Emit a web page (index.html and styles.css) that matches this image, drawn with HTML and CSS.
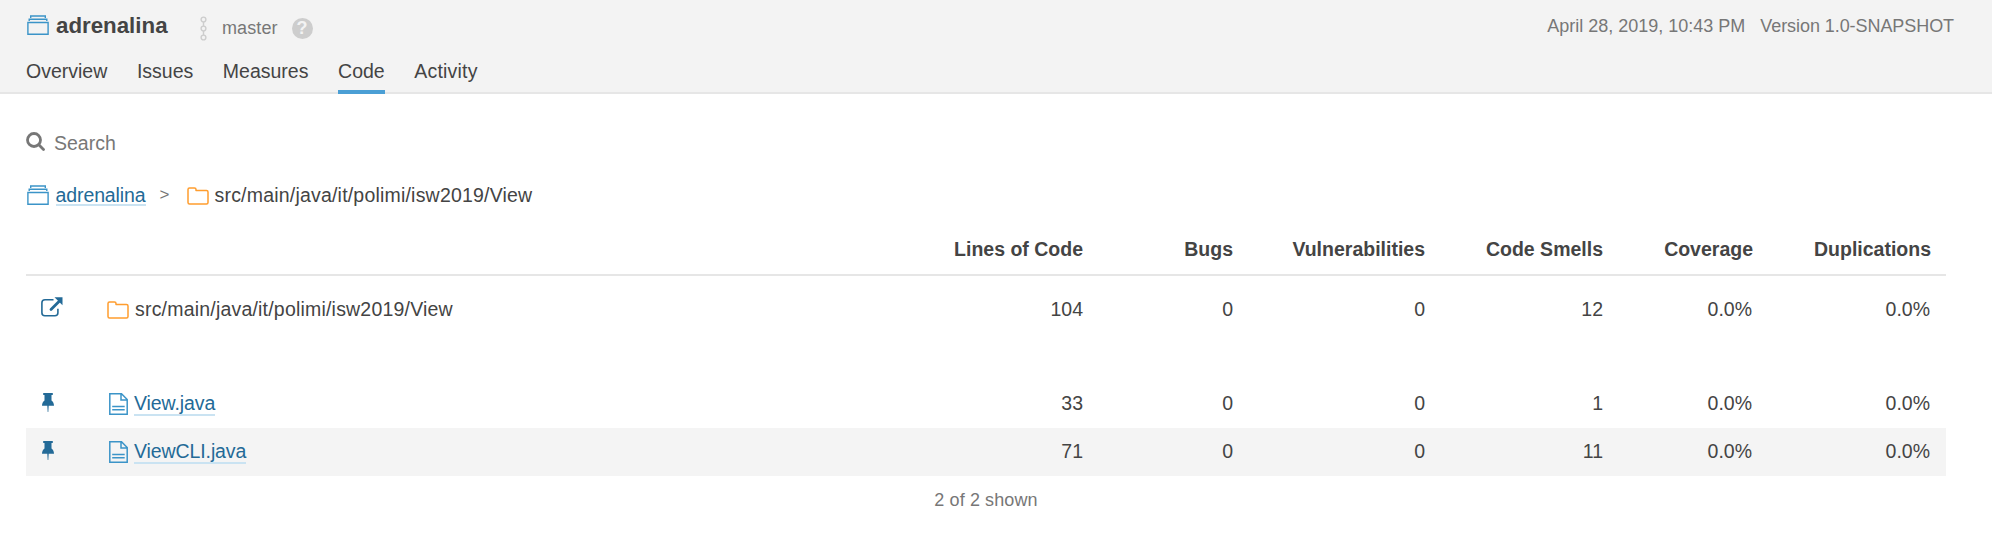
FILE: index.html
```html
<!DOCTYPE html>
<html lang="en">
<head>
<meta charset="utf-8">
<title>adrenalina</title>
<link rel="stylesheet" href="styles.css">
</head>
<body>
<svg class="defs" width="0" height="0">
  <symbol id="project" viewBox="0 0 22 20"><path fill="none" stroke="currentColor" stroke-width="1.400" d="M.9 7.500h20.200V19.300H.9zM2.200 6V4.200h17.600V6M3.700 2.900V1h14.600v1.900"/></symbol>
  <symbol id="folder" viewBox="0 0 22 18"><path fill="none" stroke="currentColor" stroke-width="1.500" stroke-linejoin="round" d="M1 15.500v-13Q1 1 2.500 1H7.500Q9 1 9 2.500V3.500H19.500Q21 3.500 21 5V15.500Q21 17 19.500 17H2.500Q1 17 1 15.500z"/></symbol>
  <symbol id="file" viewBox="0 0 19 22"><path fill="none" stroke="currentColor" stroke-width="1.500" d="M.8 .8h11.700l5.700 5.700v14.700H.8zM12 1v6h6M3.200 13.500h12.500M3.200 16.800h12.500"/></symbol>
  <symbol id="pin" viewBox="0 0 12 19"><path fill="currentColor" d="M1.200 0h9.600v2H9.500v5.500C11.200 8.500 12 10.500 12 12.800H6.700L6.300 19h-.6l-.4-6.200H0C0 10.500 .8 8.500 2.500 7.500V2H1.200z"/></symbol>
</svg>
<header class="header">
  <div class="header-top">
    <svg class="icon-project"><use href="#project"/></svg>
    <h1 class="title">adrenalina</h1>
    <svg class="branch-icon" viewBox="0 0 7 25"><g fill="none" stroke="#cdcdcd" stroke-width="1.400"><circle cx="3.500" cy="3.500" r="2.400"/><circle cx="3.500" cy="12.500" r="2.400"/><circle cx="3.500" cy="21.500" r="2.400"/><path d="M3.500 6v4M3.500 15v4"/></g></svg>
    <span class="branch">master</span>
    <span class="help">?</span>
    <span class="date">April 28, 2019, 10:43 PM</span>
    <span class="version">Version 1.0-SNAPSHOT</span>
  </div>
  <nav class="nav"><a>Overview</a><a>Issues</a><a>Measures</a><a class="active">Code</a><a class="activity">Activity</a></nav>
</header>
<main class="main">
  <div class="search">
    <svg class="search-icon" viewBox="0 0 19 19"><g fill="none" stroke="#777" stroke-width="2.800"><circle cx="8" cy="8" r="6.500"/><path stroke-linecap="round" d="M12.800 12.800l4.700 4.700"/></g></svg>
    <span>Search</span>
  </div>
  <div class="crumbs">
    <svg class="icon-project"><use href="#project"/></svg>
    <a class="link">adrenalina</a>
    <span class="sep">&gt;</span>
    <svg class="icon-folder"><use href="#folder"/></svg>
    <span class="path">src/main/java/it/polimi/isw2019/View</span>
  </div>
  <table class="table">
    <colgroup><col class="c-pin"><col class="c-name"><col class="c-loc"><col class="c-bugs"><col class="c-vuln"><col class="c-smells"><col class="c-cov"><col class="c-dup"></colgroup>
    <thead><tr><th></th><th></th><th>Lines of Code</th><th>Bugs</th><th>Vulnerabilities</th><th>Code Smells</th><th>Coverage</th><th>Duplications</th></tr></thead>
    <tbody>
      <tr class="current">
        <td><svg class="icon-open" viewBox="0 0 22 20"><path fill="none" stroke="currentColor" stroke-width="1.600" d="M12.500 2.800H4Q.9 2.800 .9 5.800v10q0 3 3 3h10q3 0 3-3v-4"/><path fill="none" stroke="currentColor" stroke-width="2.800" stroke-linecap="round" d="M10 12.500L18 4.500"/><path fill="currentColor" d="M13.500 .2h8v8z"/></svg></td>
        <td><div class="name"><svg class="icon-folder"><use href="#folder"/></svg><span class="path">src/main/java/it/polimi/isw2019/View</span></div></td>
        <td>104</td><td>0</td><td>0</td><td>12</td><td>0.0%</td><td>0.0%</td>
      </tr>
      <tr>
        <td><svg class="icon-pin"><use href="#pin"/></svg></td>
        <td><div class="name"><svg class="icon-file"><use href="#file"/></svg><a class="link">View.java</a></div></td>
        <td>33</td><td>0</td><td>0</td><td>1</td><td>0.0%</td><td>0.0%</td>
      </tr>
      <tr class="odd">
        <td><svg class="icon-pin"><use href="#pin"/></svg></td>
        <td><div class="name"><svg class="icon-file"><use href="#file"/></svg><a class="link">ViewCLI.java</a></div></td>
        <td>71</td><td>0</td><td>0</td><td>11</td><td>0.0%</td><td>0.0%</td>
      </tr>
    </tbody>
  </table>
  <footer class="footer">2 of 2 shown</footer>
</main>
</body>
</html>
```
FILE: styles.css
```css
* { box-sizing: border-box; }
body { margin: 0; background: #fff; color: #444; font: 19.5px/24px "Liberation Sans", Arial, sans-serif; }
svg { display: block; flex: none; }
.defs { position: absolute; }
.header { height: 94px; padding: 12px 38px 0 26px; background: #f3f3f3; border-bottom: 2px solid #e6e6e6; }
.header-top { display: flex; height: 30px; align-items: flex-start; }
.icon-project { width: 22px; height: 20px; color: #3b94c8; }
.header-top .icon-project { margin: 3px 0 0 1px; }
.title { margin: 2px 0 0 7px; font-size: 22.3px; line-height: 24px; width: 112px; white-space: nowrap; }
.branch-icon { width: 7px; height: 25px; margin: 4px 0 0 32px; }
.branch { margin: 4px 0 0 15px; width: 56px; font-size: 18px; letter-spacing: .1px; color: #777; }
.help { width: 21px; height: 21px; margin: 6px 0 0 13.5px; border-radius: 50%; background: #cdcdcd; color: #f3f3f3; font-weight: bold; font-size: 18px; line-height: 21px; text-align: center; }
.date { margin: 2px 15px 0 auto; font-size: 18px; color: #777; }
.version { margin-top: 2px; font-size: 18px; letter-spacing: -.07px; color: #777; }
.nav { display: flex; gap: 29.6px; height: 50px; padding-top: 17px; }
.nav a { height: 35px; }
.nav .active { border-bottom: 4px solid #4b9fd5; }
.nav .activity { letter-spacing: .2px; }
.main { padding: 0 46px 0 26px; }
.search { display: flex; gap: 9px; margin-top: 37px; height: 24px; color: #777; }
.search-icon { width: 19px; height: 19px; margin-top: 1px; }
.crumbs { display: flex; height: 24px; margin-top: 28px; padding-left: 1px; }
.crumbs .icon-project { margin-top: 2px; }
.crumbs .link { margin-left: 6.5px; height: 23px; letter-spacing: -.1px; }
.crumbs .icon-folder { margin-top: 4px; }
.sep { margin: 0 17px 0 14px; font-size: 17px; color: #777; }
.icon-folder { width: 22px; height: 18px; margin-top: 4px; color: #ff9d2e; }
.path { margin-left: 6px; letter-spacing: .2px; }
.link { color: #236a97; height: 25px; border-bottom: 2px solid #cae3f2; line-height: 24px; letter-spacing: -.1px; }
.table { width: 1920px; margin-top: 30px; border-collapse: collapse; table-layout: fixed; }
.c-pin { width: 81px; } .c-name { width: 830px; } .c-loc { width: 161px; } .c-bugs { width: 150px; }
.c-vuln { width: 192px; } .c-smells { width: 178px; } .c-cov { width: 150px; } .c-dup { width: 178px; }
th { height: 38px; padding: 0 15px 13px 0; text-align: right; white-space: nowrap; vertical-align: bottom; }
thead tr { border-bottom: 2px solid #e6e6e6; }
td { height: 48px; padding: 11px 15px 0 0; text-align: right; vertical-align: top; }
td:nth-child(n+7) { padding-right: 16px; }
td:first-child { padding-left: 15px; color: #236a97; }
td:nth-child(2) { padding: 11px 0 0; }
.current td, .current td:nth-child(2) { height: 105px; padding-top: 21px; }
.odd { background: #f4f4f4; }
.name { display: flex; }
.icon-open { width: 22px; height: 20px; }
.icon-pin { width: 12px; height: 19px; margin: 2px 0 0 1px; }
.icon-file { width: 19px; height: 22px; margin: 2px 0 0 2px; color: #3b94c8; }
.name .link { margin-left: 6px; }
.footer { margin-top: 12px; text-align: center; font-size: 18px; letter-spacing: .1px; color: #777; }
```
